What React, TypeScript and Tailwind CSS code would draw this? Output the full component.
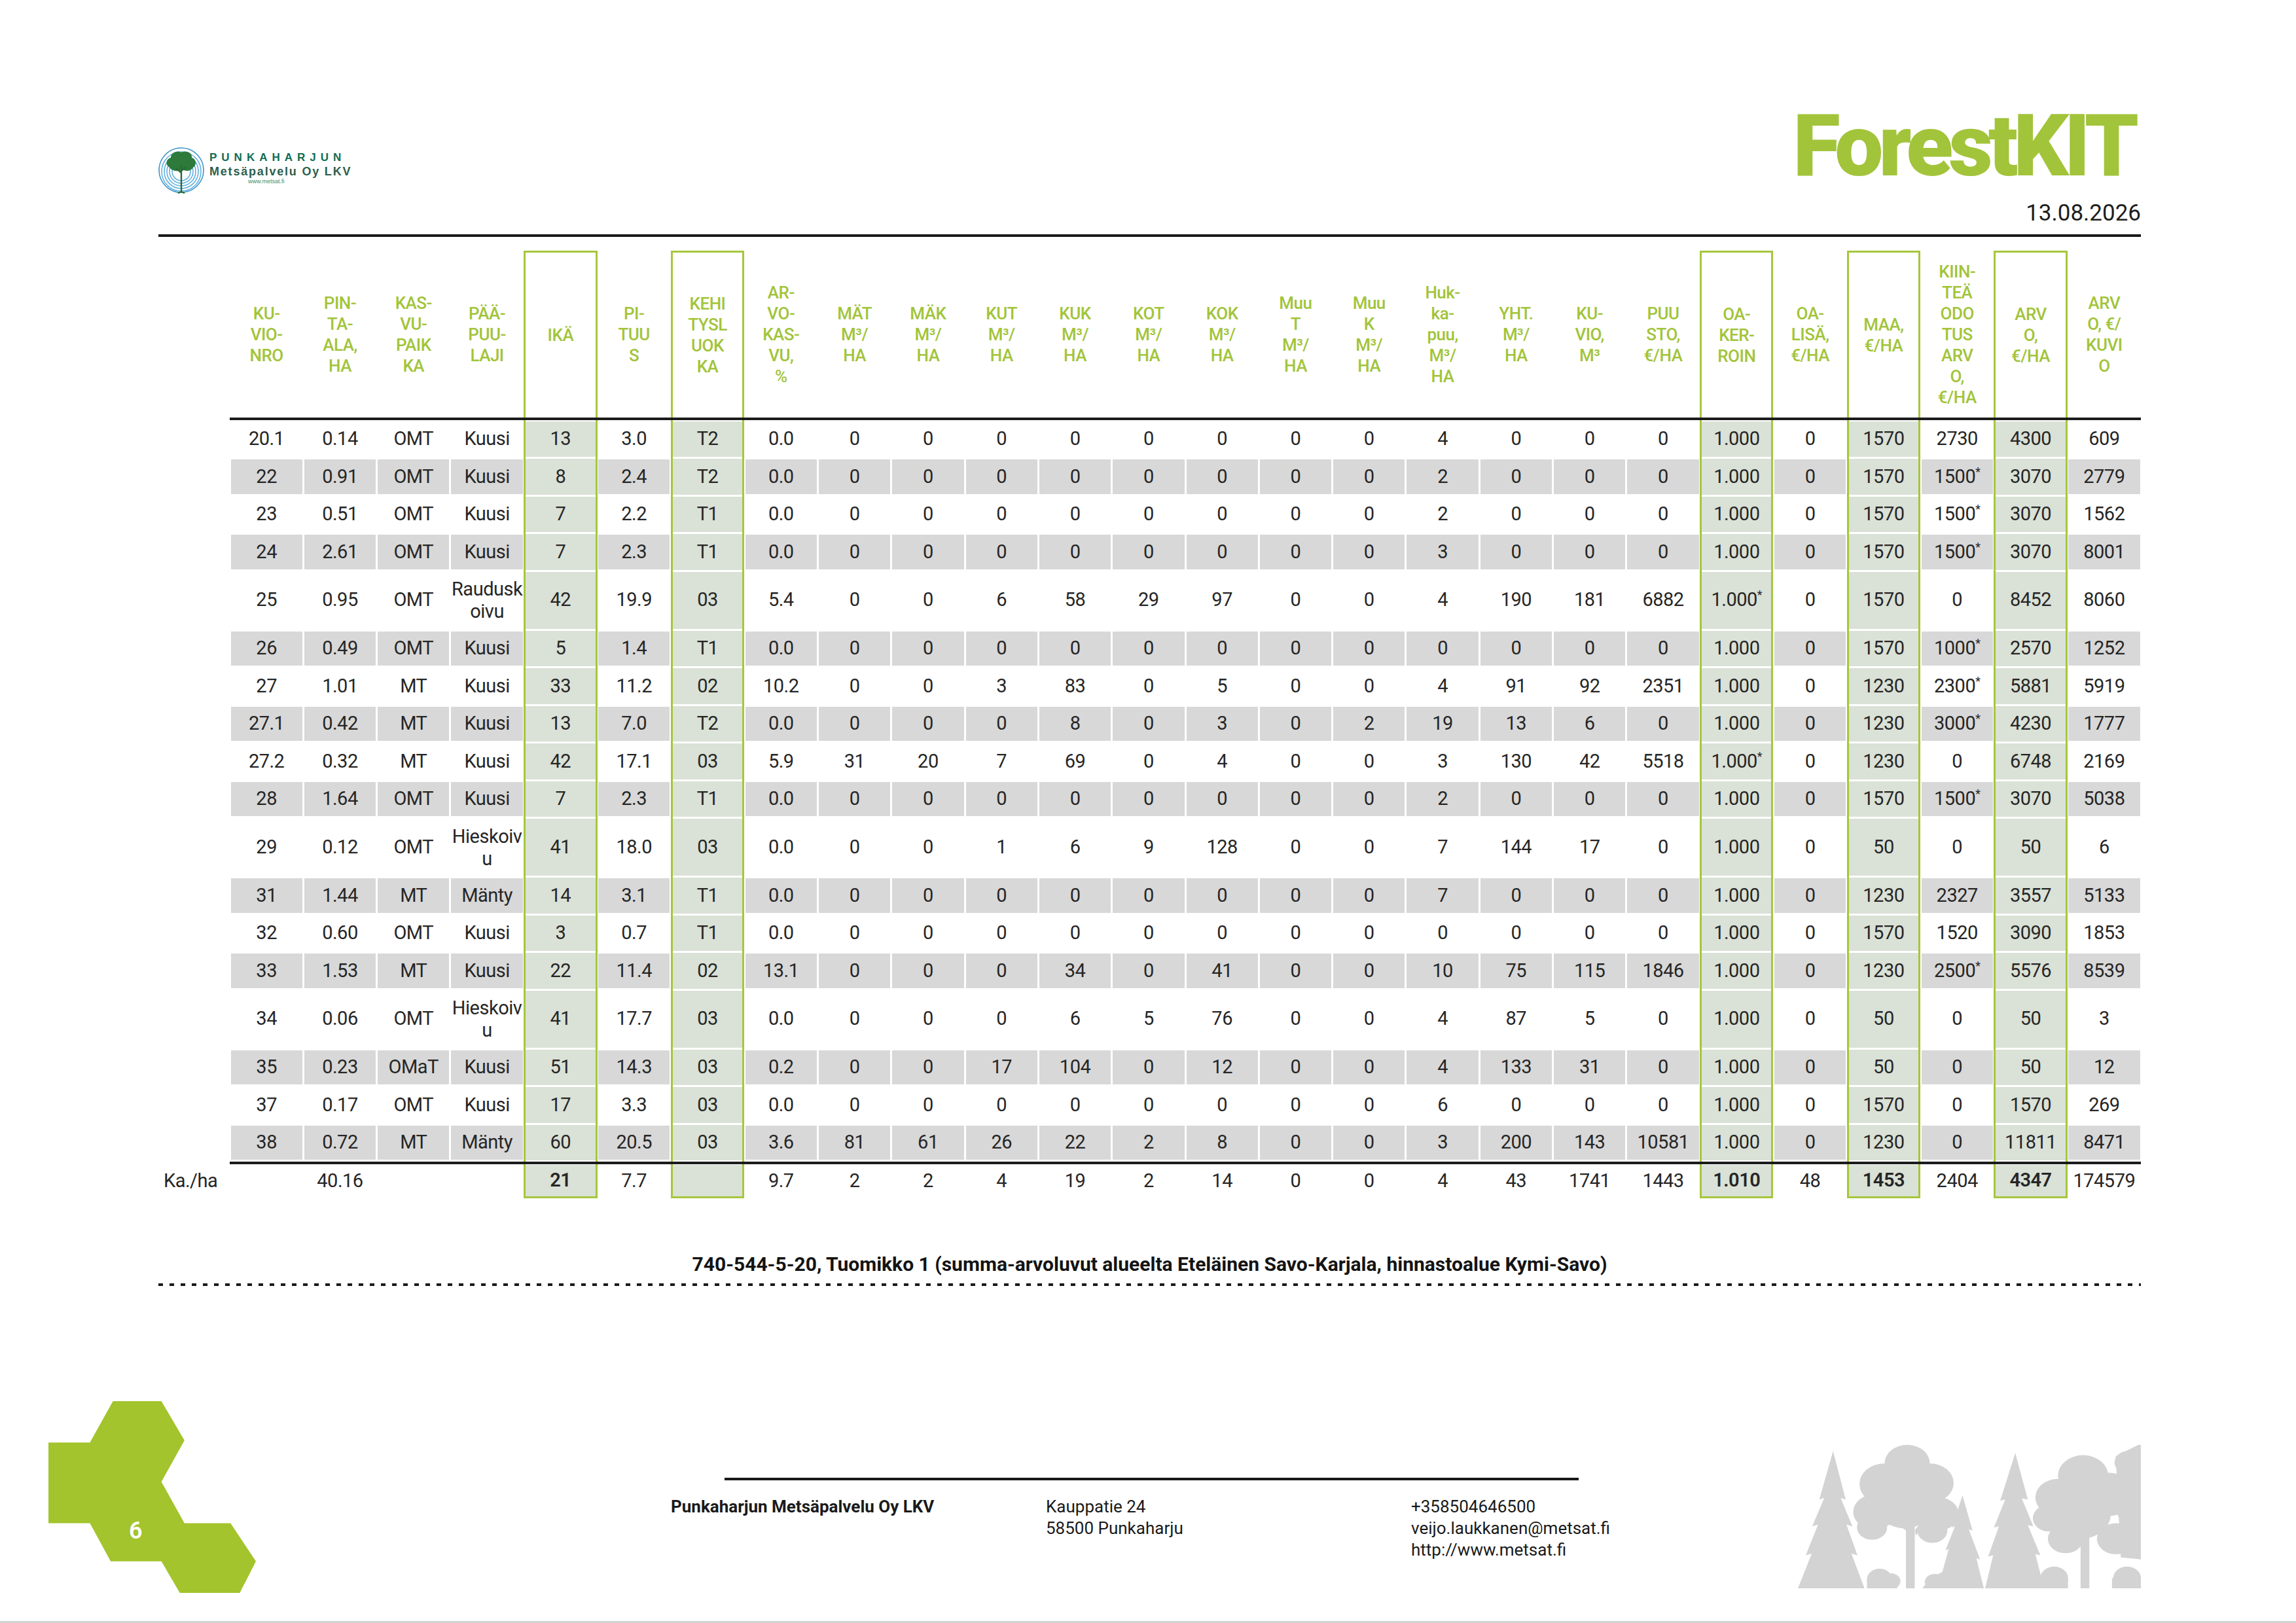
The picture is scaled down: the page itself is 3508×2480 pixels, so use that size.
import React from "react";

const GRID = "grid grid-cols-[109px_repeat(26,minmax(0,1fr))]";
const HL = new Set([4, 6, 20, 22, 24]);

const headers: string[][] = [
  ["KU-", "VIO-", "NRO"],
  ["PIN-", "TA-", "ALA,", "HA"],
  ["KAS-", "VU-", "PAIK", "KA"],
  ["PÄÄ-", "PUU-", "LAJI"],
  ["IKÄ"],
  ["PI-", "TUU", "S"],
  ["KEHI", "TYSL", "UOK", "KA"],
  ["AR-", "VO-", "KAS-", "VU,", "%"],
  ["MÄT", "M³/", "HA"],
  ["MÄK", "M³/", "HA"],
  ["KUT", "M³/", "HA"],
  ["KUK", "M³/", "HA"],
  ["KOT", "M³/", "HA"],
  ["KOK", "M³/", "HA"],
  ["Muu", "T", "M³/", "HA"],
  ["Muu", "K", "M³/", "HA"],
  ["Huk-", "ka-", "puu,", "M³/", "HA"],
  ["YHT.", "M³/", "HA"],
  ["KU-", "VIO,", "M³"],
  ["PUU", "STO,", "€/HA"],
  ["OA-", "KER-", "ROIN"],
  ["OA-", "LISÄ,", "€/HA"],
  ["MAA,", "€/HA"],
  ["KIIN-", "TEÄ", "ODO", "TUS", "ARV", "O,", "€/HA"],
  ["ARV", "O,", "€/HA"],
  ["ARV", "O, €/", "KUVI", "O"],
];

const z8 = ["0", "0", "0", "0", "0", "0", "0", "0"];

type Row = { c: string[]; tall?: boolean };

const rows: Row[] = [
  { c: ["20.1", "0.14", "OMT", "Kuusi", "13", "3.0", "T2", "0.0", ...z8, "4", "0", "0", "0", "1.000", "0", "1570", "2730", "4300", "609"] },
  { c: ["22", "0.91", "OMT", "Kuusi", "8", "2.4", "T2", "0.0", ...z8, "2", "0", "0", "0", "1.000", "0", "1570", "1500*", "3070", "2779"] },
  { c: ["23", "0.51", "OMT", "Kuusi", "7", "2.2", "T1", "0.0", ...z8, "2", "0", "0", "0", "1.000", "0", "1570", "1500*", "3070", "1562"] },
  { c: ["24", "2.61", "OMT", "Kuusi", "7", "2.3", "T1", "0.0", ...z8, "3", "0", "0", "0", "1.000", "0", "1570", "1500*", "3070", "8001"] },
  { c: ["25", "0.95", "OMT", "Raudusk\noivu", "42", "19.9", "03", "5.4", "0", "0", "6", "58", "29", "97", "0", "0", "4", "190", "181", "6882", "1.000*", "0", "1570", "0", "8452", "8060"], tall: true },
  { c: ["26", "0.49", "OMT", "Kuusi", "5", "1.4", "T1", "0.0", ...z8, "0", "0", "0", "0", "1.000", "0", "1570", "1000*", "2570", "1252"] },
  { c: ["27", "1.01", "MT", "Kuusi", "33", "11.2", "02", "10.2", "0", "0", "3", "83", "0", "5", "0", "0", "4", "91", "92", "2351", "1.000", "0", "1230", "2300*", "5881", "5919"] },
  { c: ["27.1", "0.42", "MT", "Kuusi", "13", "7.0", "T2", "0.0", "0", "0", "0", "8", "0", "3", "0", "2", "19", "13", "6", "0", "1.000", "0", "1230", "3000*", "4230", "1777"] },
  { c: ["27.2", "0.32", "MT", "Kuusi", "42", "17.1", "03", "5.9", "31", "20", "7", "69", "0", "4", "0", "0", "3", "130", "42", "5518", "1.000*", "0", "1230", "0", "6748", "2169"] },
  { c: ["28", "1.64", "OMT", "Kuusi", "7", "2.3", "T1", "0.0", ...z8, "2", "0", "0", "0", "1.000", "0", "1570", "1500*", "3070", "5038"] },
  { c: ["29", "0.12", "OMT", "Hieskoiv\nu", "41", "18.0", "03", "0.0", "0", "0", "1", "6", "9", "128", "0", "0", "7", "144", "17", "0", "1.000", "0", "50", "0", "50", "6"], tall: true },
  { c: ["31", "1.44", "MT", "Mänty", "14", "3.1", "T1", "0.0", ...z8, "7", "0", "0", "0", "1.000", "0", "1230", "2327", "3557", "5133"] },
  { c: ["32", "0.60", "OMT", "Kuusi", "3", "0.7", "T1", "0.0", ...z8, "0", "0", "0", "0", "1.000", "0", "1570", "1520", "3090", "1853"] },
  { c: ["33", "1.53", "MT", "Kuusi", "22", "11.4", "02", "13.1", "0", "0", "0", "34", "0", "41", "0", "0", "10", "75", "115", "1846", "1.000", "0", "1230", "2500*", "5576", "8539"] },
  { c: ["34", "0.06", "OMT", "Hieskoiv\nu", "41", "17.7", "03", "0.0", "0", "0", "0", "6", "5", "76", "0", "0", "4", "87", "5", "0", "1.000", "0", "50", "0", "50", "3"], tall: true },
  { c: ["35", "0.23", "OMaT", "Kuusi", "51", "14.3", "03", "0.2", "0", "0", "17", "104", "0", "12", "0", "0", "4", "133", "31", "0", "1.000", "0", "50", "0", "50", "12"] },
  { c: ["37", "0.17", "OMT", "Kuusi", "17", "3.3", "03", "0.0", ...z8, "6", "0", "0", "0", "1.000", "0", "1570", "0", "1570", "269"] },
  { c: ["38", "0.72", "MT", "Mänty", "60", "20.5", "03", "3.6", "81", "61", "26", "22", "2", "8", "0", "0", "3", "200", "143", "10581", "1.000", "0", "1230", "0", "11811", "8471"] },
];

const summary = ["", "40.16", "", "", "21", "7.7", "", "9.7", "2", "2", "4", "19", "2", "14", "0", "0", "4", "43", "1741", "1443", "1.010", "48", "1453", "2404", "4347", "174579"];

function Val({ v }: { v: string }) {
  if (v.includes("\n")) {
    return (
      <div className="flex flex-col items-center leading-[34px]">
        {v.split("\n").map((l, i) => (
          <span key={i}>{l}</span>
        ))}
      </div>
    );
  }
  if (v.endsWith("*")) {
    return (
      <span>
        {v.slice(0, -1)}
        <span className="text-[18px] align-super">*</span>
      </span>
    );
  }
  return <span>{v}</span>;
}

function Logo() {
  return (
    <div className="mt-[224px] flex items-start gap-[8px]">
      <svg width="70" height="72" viewBox="0 0 70 72">
        <circle cx="35" cy="36" r="34" fill="#ffffff" stroke="#3a93c8" strokeWidth="1.6" />
        {[30, 26, 22, 18, 14].map((r) => (
          <circle key={r} cx="35" cy="38" r={r} fill="none" stroke="#5aaede" strokeWidth="1.5" />
        ))}
        <path
          d="M16 31 C10 27 12 19 19 17 C19 9 29 5 35 9 C42 5 52 9 51 17 C58 19 59 28 53 32 C50 38 41 38 37 35 C31 39 21 38 16 31 Z"
          fill="#2d7a3a"
        />
        <path d="M35 28 L35 69 M35 40 L27 33 M35 37 L43 31 M35 69 L30 71 M35 69 L40 71" stroke="#2a6a36" strokeWidth="2.4" fill="none" />
      </svg>
      <div className="mt-[8px] flex flex-col font-['Liberation_Sans',sans-serif]">
        <span className="text-[17px] leading-[17px] font-bold tracking-[7px] text-[#0f6e55]">PUNKAHARJUN</span>
        <span className="mt-[3px] text-[18px] leading-[20px] font-bold tracking-[1.8px] text-[#2b5f4d]">Metsäpalvelu Oy LKV</span>
        <span className="pl-[59px] text-[9px] leading-[10px] text-[#3d8f69]">www.metsat.fi</span>
      </div>
    </div>
  );
}

function HeaderRow() {
  return (
    <div className={`${GRID} h-[255px]`}>
      <div />
      {headers.map((lines, i) => (
        <div
          key={i}
          className={`flex flex-col items-center justify-center text-center text-[26px] leading-[32px] font-medium tracking-[-0.5px] text-[#a2c43a] ${
            HL.has(i) ? "border-x-[3px] border-t-[3px] border-[#a6c73c]" : ""
          }`}
        >
          {lines.map((l, j) => (
            <span key={j} className="whitespace-nowrap">
              {l}
            </span>
          ))}
        </div>
      ))}
    </div>
  );
}

function DataRow({ row, striped }: { row: Row; striped: boolean }) {
  return (
    <div className={`${GRID} ${row.tall ? "h-[90px]" : "h-[57.5px]"}`}>
      <div />
      {row.c.map((v, i) =>
        HL.has(i) ? (
          <div key={i} className="flex border-x-[3px] border-[#a6c73c] py-[1.5px]">
            <div className="flex flex-1 items-center justify-center bg-[#dae1d6]">
              <Val v={v} />
            </div>
          </div>
        ) : (
          <div key={i} className="flex px-[1.5px] py-[2.5px]">
            <div className={`flex flex-1 items-center justify-center ${striped ? "bg-[#d8d8d8]" : ""}`}>
              <Val v={v} />
            </div>
          </div>
        )
      )}
    </div>
  );
}

function SummaryRow() {
  return (
    <div className={`${GRID} h-[52px]`}>
      <div className="flex items-center pl-[8px]">Ka./ha</div>
      {summary.map((v, i) =>
        HL.has(i) ? (
          <div key={i} className="flex border-x-[3px] border-b-[3px] border-[#a6c73c] pt-[1px]">
            <div className="flex flex-1 items-center justify-center bg-[#dae1d6] font-semibold">{v}</div>
          </div>
        ) : (
          <div key={i} className="flex items-center justify-center">
            {v}
          </div>
        )
      )}
    </div>
  );
}

function Hexagons() {
  return (
    <div className="relative ml-[74px] mt-[176px] h-[293px] w-[317px]">
      <svg width="317" height="293" viewBox="105 120 450 880" preserveAspectRatio="none">
        <polygon
          points="245,120 350,120 400,300 350,490 400,680 500,680 555,855 520,1000 390,1000 350,855 240,855 195,680 105,680 105,310 195,310"
          fill="#a3c42c"
        />
      </svg>
      <span className="absolute left-[123px] top-[180px] text-[36px] leading-none font-semibold text-white">6</span>
    </div>
  );
}

function Trees() {
  const f = "#d3d3d3";
  return (
    <svg className="ml-[272px] mt-[238px]" width="524" height="224" viewBox="75 130 1365 710" preserveAspectRatio="none">
      <g fill={f}>
        <polygon points="215,175 265,410 245,402 292,540 268,532 312,680 288,672 340,840 75,840 130,672 106,680 155,532 132,540 180,402 160,410" />
        <circle cx="510" cy="235" r="90" />
        <circle cx="420" cy="335" r="100" />
        <circle cx="600" cy="330" r="95" />
        <circle cx="380" cy="470" r="85" />
        <circle cx="635" cy="480" r="80" />
        <circle cx="500" cy="440" r="110" />
        <circle cx="370" cy="545" r="60" />
        <circle cx="610" cy="560" r="60" />
        <rect x="505" y="480" width="35" height="360" />
        <polygon points="505,560 460,520 470,510 515,545" />
        <polygon points="540,560 570,510 580,520 545,585" />
        <circle cx="400" cy="795" r="50" />
        <circle cx="445" cy="805" r="38" />
        <rect x="350" y="795" width="120" height="45" />
        <polygon points="730,390 770,560 755,554 800,700 785,694 815,840 570,840 600,795 650,760 675,650 662,656 700,540 688,546" />
        <circle cx="620" cy="810" r="40" />
        <polygon points="940,185 990,410 966,404 1012,540 990,534 1040,680 1020,674 1055,840 820,840 852,680 832,686 875,540 855,546 900,410 880,416" />
        <circle cx="1210" cy="295" r="100" />
        <circle cx="1110" cy="400" r="90" />
        <circle cx="1310" cy="385" r="105" />
        <circle cx="1075" cy="500" r="65" />
        <circle cx="1200" cy="480" r="120" />
        <circle cx="1390" cy="230" r="55" />
        <circle cx="1395" cy="340" r="50" />
        <circle cx="1395" cy="470" r="50" />
        <circle cx="1340" cy="600" r="75" />
        <circle cx="1140" cy="600" r="70" />
        <polygon points="1340,200 1430,145 1440,145 1440,700 1360,690" />
        <rect x="1200" y="500" width="35" height="340" />
        <polygon points="1200,600 1160,620 1165,632 1205,620" />
        <circle cx="1095" cy="790" r="55" />
        <rect x="1040" y="790" width="110" height="50" />
        <circle cx="1385" cy="790" r="55" />
        <rect x="1325" y="790" width="115" height="50" />
      </g>
    </svg>
  );
}

export default function App() {
  return (
    <div className="flex h-[2480px] w-[3508px] flex-col overflow-hidden bg-white font-[Roboto,Liberation_Sans,sans-serif] text-[#262626]">
      <div className="flex flex-col pl-[242px] pr-[237px]">
        <div className="flex items-start justify-between">
          <Logo />
          <div className="flex flex-col items-end">
            <div className="mt-[157px] pr-[10px] text-[132px] leading-none font-black tracking-[-7px] text-[#a2c43a]">ForestKIT</div>
            <div className="mt-[19px] text-[35px] leading-none text-[#1e1e1e]">13.08.2026</div>
          </div>
        </div>
        <div className="mt-[15px] h-[4px] bg-[#1a1a1a]" />

        <div className="mt-[21px] flex flex-col text-[29px] tracking-[-0.5px]">
          <HeaderRow />
          <div className="ml-[109px] h-[4px] bg-[#1c1c1c]" />
          {rows.map((r, i) => (
            <DataRow key={i} row={r} striped={i % 2 === 1} />
          ))}
          <div className="ml-[109px] h-[4px] bg-[#1c1c1c]" />
          <SummaryRow />
        </div>

        <div className="mt-[82px] text-center text-[30px] leading-[38px] font-bold text-[#141414]">
          740-544-5-20, Tuomikko 1 (summa-arvoluvut alueelta Eteläinen Savo-Karjala, hinnastoalue Kymi-Savo)
        </div>
        <div className="mt-[10px] h-[4px] bg-[repeating-linear-gradient(90deg,#1a1a1a_0px,#1a1a1a_7px,transparent_7px,transparent_17px)]" />
      </div>

      <div className="flex items-start">
        <Hexagons />
        <div className="ml-[634px] mt-[293px] flex w-[1450px] flex-col">
          <div className="ml-[82px] h-[4px] w-[1305px] bg-[#1a1a1a]" />
          <div className="mt-[24px] flex text-[26px] leading-[33px] text-[#1a1a1a]">
            <div className="w-[573px] font-bold">Punkaharjun Metsäpalvelu Oy LKV</div>
            <div className="flex w-[558px] flex-col">
              <span>Kauppatie 24</span>
              <span>58500 Punkaharju</span>
            </div>
            <div className="flex flex-col">
              <span>+358504646500</span>
              <span>veijo.laukkanen@metsat.fi</span>
              <span>http://www.metsat.fi</span>
            </div>
          </div>
        </div>
        <Trees />
      </div>
      <div className="mt-auto h-[3px] bg-[#d2d2d2]" />
    </div>
  );
}
